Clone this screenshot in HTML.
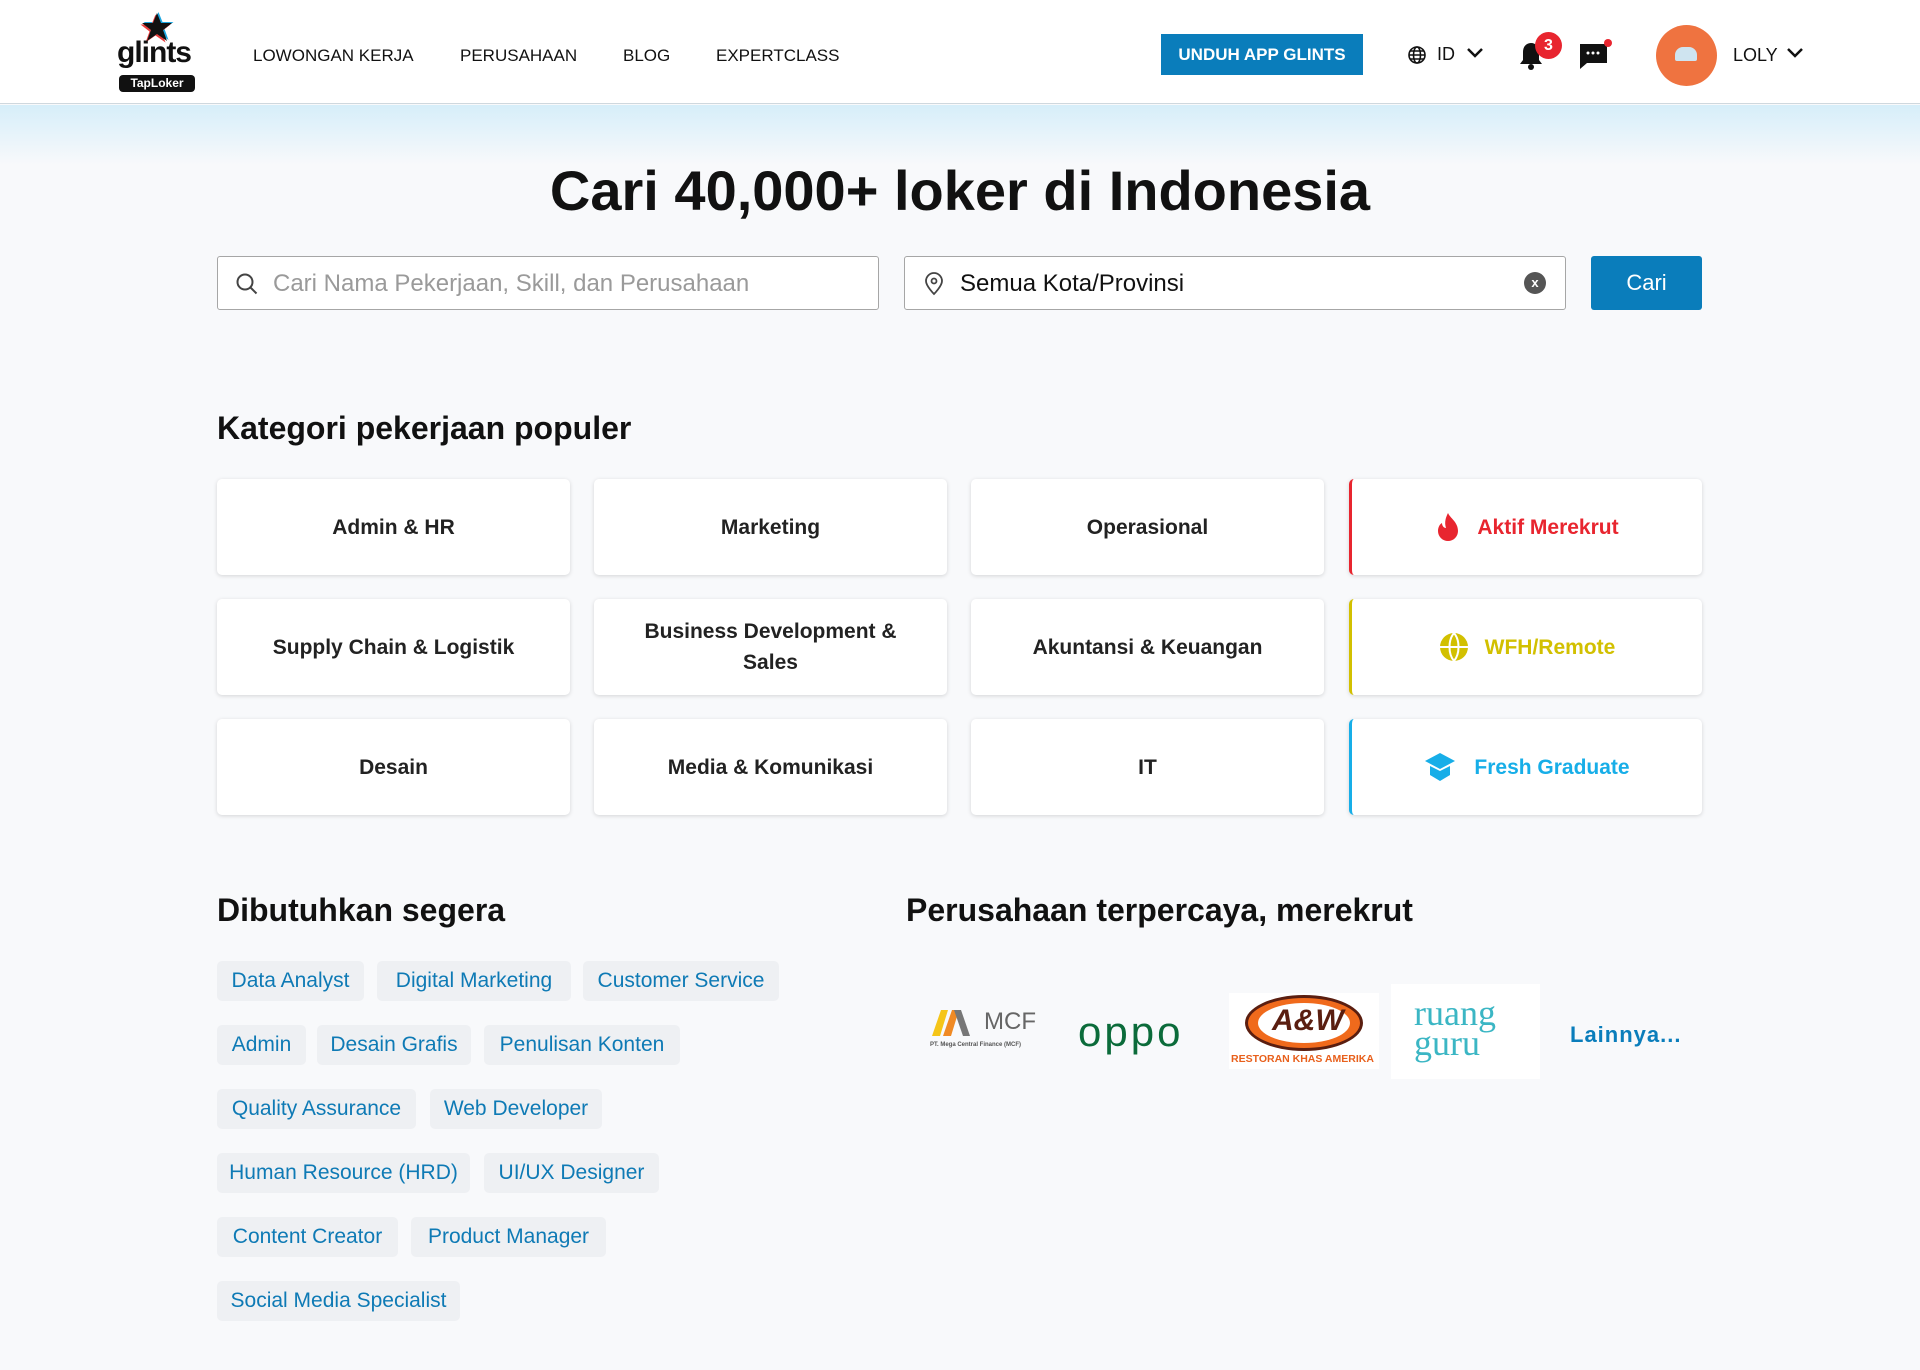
<!DOCTYPE html>
<html><head><meta charset="utf-8"><style>
*{margin:0;padding:0;box-sizing:border-box}
body{width:1920px;height:1370px;background:#f8f9fb;font-family:"Liberation Sans",sans-serif;position:relative;overflow:hidden;color:#1a1a1a}
.a{position:absolute}
.hdr{left:0;top:0;width:1920px;height:104px;background:#fff;border-bottom:1px solid #cfd8de}
.grad{left:0;top:105px;width:1920px;height:60px;background:linear-gradient(#d6eef9,#f8f9fb)}
.nav{top:46px;font-size:17px;color:#111}
.card{background:#fff;border-radius:5px;box-shadow:0 1px 4px rgba(0,0,0,.15);width:353px;height:96px;display:flex;align-items:center;justify-content:center;text-align:center;font-size:21px;font-weight:bold;color:#222;line-height:31px}
.tag{background:#eef0f3;border-radius:5px;height:40px;line-height:40px;font-size:21px;color:#0e7ab5;text-align:center;white-space:nowrap}
.inp{background:#fff;border:1px solid #a6a6a6;border-radius:3px;height:54px;top:256px}
</style></head><body>
<div class="a hdr"></div>
<div class="a grad"></div>
<svg class="a" style="left:140px;top:12px" width="34" height="32" viewBox="0 0 34 32"><polygon points="17,1 21,11 32,11 23,18 27,29 17,22 7,29 11,18 2,11 13,11" fill="#1ba6e0" transform="translate(1.5,-1)"/><polygon points="17,1 21,11 32,11 23,18 27,29 17,22 7,29 11,18 2,11 13,11" fill="#e83e3e" transform="translate(-1.5,1.5)"/><polygon points="17,1 21,11 32,11 23,18 27,29 17,22 7,29 11,18 2,11 13,11" fill="#111"/></svg>
<div class="a" style="left:117px;top:36px;font-size:30px;font-weight:bold;letter-spacing:-1px;color:#111">glints</div>
<div class="a" style="left:119px;top:75px;width:76px;height:17px;background:#111;border-radius:4px;color:#fff;font-size:12px;font-weight:bold;text-align:center;line-height:17px">TapLoker</div>
<div class="a nav" style="left:253px">LOWONGAN KERJA</div>
<div class="a nav" style="left:460px">PERUSAHAAN</div>
<div class="a nav" style="left:623px">BLOG</div>
<div class="a nav" style="left:716px">EXPERTCLASS</div>
<div class="a" style="left:1161px;top:34px;width:202px;height:41px;background:#0a7dbb;color:#fff;font-size:17px;font-weight:bold;text-align:center;line-height:41px">UNDUH APP GLINTS</div>
<svg class="a" style="left:1407px;top:45px" width="20" height="20" viewBox="0 0 20 20" fill="none" stroke="#111" stroke-width="1.6"><circle cx="10" cy="10" r="8"/><ellipse cx="10" cy="10" rx="3.5" ry="8"/><path d="M2 10h16M3 6h14M3 14h14"/></svg>
<div class="a nav" style="left:1437px;top:44px;font-size:18px">ID</div>
<svg class="a" style="left:1466px;top:47px" width="18" height="12" viewBox="0 0 18 12"><path d="M2 2l7 7 7-7" stroke="#111" stroke-width="2.5" fill="none"/></svg>
<svg class="a" style="left:1518px;top:40px" width="26" height="32" viewBox="0 0 26 32"><path d="M13 3c-5 0-8 4-8 9v8l-3 4h22l-3-4v-8c0-5-3-9-8-9z" fill="#111"/><circle cx="13" cy="27" r="3" fill="#111"/></svg>
<div class="a" style="left:1535px;top:32px;width:27px;height:27px;border-radius:50%;background:#e8252f;color:#fff;font-size:16px;font-weight:bold;text-align:center;line-height:27px">3</div>
<svg class="a" style="left:1578px;top:38px" width="36" height="36" viewBox="0 0 36 36"><path d="M2 6h27v19H9l-7 6z" fill="#111"/><circle cx="10" cy="15" r="1.5" fill="#fff"/><circle cx="15" cy="15" r="1.5" fill="#fff"/><circle cx="20" cy="15" r="1.5" fill="#fff"/><circle cx="30" cy="5" r="4" fill="#e8252f"/></svg>
<div class="a" style="left:1656px;top:25px;width:61px;height:61px;border-radius:50%;background:#ef7340"></div>
<div class="a" style="left:1675px;top:47px;width:22px;height:14px;background:#cfe4f0;border-radius:8px 8px 2px 2px"></div>
<div class="a nav" style="left:1733px;top:45px;font-size:18px">LOLY</div>
<svg class="a" style="left:1786px;top:47px" width="18" height="12" viewBox="0 0 18 12"><path d="M2 2l7 7 7-7" stroke="#111" stroke-width="2.5" fill="none"/></svg>

<div class="a" style="left:0;width:1920px;top:158px;text-align:center;font-size:56px;font-weight:bold;color:#111">Cari 40,000+ loker di Indonesia</div>
<div class="a inp" style="left:217px;width:662px"></div>
<svg class="a" style="left:235px;top:272px" width="24" height="24" viewBox="0 0 24 24" fill="none" stroke="#444" stroke-width="2"><circle cx="10" cy="10" r="7.5"/><path d="M15.5 15.5l6 6"/></svg>
<div class="a" style="left:273px;top:270px;font-size:24px;color:#9a9a9a">Cari Nama Pekerjaan, Skill, dan Perusahaan</div>
<div class="a inp" style="left:904px;width:662px"></div>
<svg class="a" style="left:923px;top:272px" width="22" height="24" viewBox="0 0 22 24" fill="none" stroke="#444" stroke-width="1.8"><path d="M11 22s-8-8-8-13a8 8 0 0116 0c0 5-8 13-8 13z"/><circle cx="11" cy="9" r="2.5"/></svg>
<div class="a" style="left:960px;top:270px;font-size:24px;color:#111">Semua Kota/Provinsi</div>
<div class="a" style="left:1524px;top:272px;width:22px;height:22px;border-radius:50%;background:#555;color:#fff;font-size:13px;font-weight:bold;text-align:center;line-height:21px">x</div>
<div class="a" style="left:1591px;top:256px;width:111px;height:54px;background:#0a7dbb;border-radius:3px;color:#fff;font-size:22px;text-align:center;line-height:54px">Cari</div>

<div class="a" style="left:217px;top:410px;font-size:32px;font-weight:bold;color:#111">Kategori pekerjaan populer</div>
<div class="a card" style="left:217px;top:479px">Admin &amp; HR</div>
<div class="a card" style="left:594px;top:479px">Marketing</div>
<div class="a card" style="left:971px;top:479px">Operasional</div>
<div class="a card" style="left:1349px;top:479px;border-left:3px solid #e8252f;color:#e8252f"><svg width="26" height="32" viewBox="0 0 26 32" style="margin-right:16px"><path d="M13 2c2 5 10 9 10 18a10 10 0 01-20 0c0-4 2-7 4-8 0 3 2 5 4 5-2-6 0-11 2-15z" fill="#e8252f"/></svg>Aktif Merekrut</div>
<div class="a card" style="left:217px;top:599px">Supply Chain &amp; Logistik</div>
<div class="a card" style="left:594px;top:599px">Business Development &amp;<br>Sales</div>
<div class="a card" style="left:971px;top:599px">Akuntansi &amp; Keuangan</div>
<div class="a card" style="left:1349px;top:599px;border-left:3px solid #d2c000;color:#d2c000"><svg width="30" height="30" viewBox="0 0 30 30" style="margin-right:16px"><circle cx="15" cy="15" r="14" fill="#d2c000"/><path d="M1 15h28M15 1c-6 7-6 21 0 28M15 1c6 7 6 21 0 28" stroke="#fff" stroke-width="2" fill="none"/></svg>WFH/Remote</div>
<div class="a card" style="left:217px;top:719px">Desain</div>
<div class="a card" style="left:594px;top:719px">Media &amp; Komunikasi</div>
<div class="a card" style="left:971px;top:719px">IT</div>
<div class="a card" style="left:1349px;top:719px;border-left:3px solid #17aee8;color:#17aee8"><svg width="32" height="32" viewBox="0 0 32 32" style="margin-right:18px"><path d="M16 2l15 8-15 8-15-8z" fill="#17aee8"/><path d="M6 15v9l10 6 10-6v-9l-10 5z" fill="#17aee8"/></svg>Fresh Graduate</div>

<div class="a" style="left:217px;top:892px;font-size:32px;font-weight:bold;color:#111">Dibutuhkan segera</div>
<div class="a" style="left:906px;top:892px;font-size:32px;font-weight:bold;color:#111">Perusahaan terpercaya, merekrut</div>

<div class="a tag" style="left:217px;top:961px;width:147px">Data Analyst</div>
<div class="a tag" style="left:377px;top:961px;width:194px">Digital Marketing</div>
<div class="a tag" style="left:583px;top:961px;width:196px">Customer Service</div>
<div class="a tag" style="left:217px;top:1025px;width:89px">Admin</div>
<div class="a tag" style="left:317px;top:1025px;width:154px">Desain Grafis</div>
<div class="a tag" style="left:484px;top:1025px;width:196px">Penulisan Konten</div>
<div class="a tag" style="left:217px;top:1089px;width:199px">Quality Assurance</div>
<div class="a tag" style="left:430px;top:1089px;width:172px">Web Developer</div>
<div class="a tag" style="left:217px;top:1153px;width:253px">Human Resource (HRD)</div>
<div class="a tag" style="left:484px;top:1153px;width:175px">UI/UX Designer</div>
<div class="a tag" style="left:217px;top:1217px;width:181px">Content Creator</div>
<div class="a tag" style="left:411px;top:1217px;width:195px">Product Manager</div>
<div class="a tag" style="left:217px;top:1281px;width:243px">Social Media Specialist</div>

<svg class="a" style="left:932px;top:1010px" width="44" height="26" viewBox="0 0 44 26"><path d="M0 26L9 0h7l-8 26z" fill="#f5c518"/><path d="M11 26L20 0h7l-8 26z" fill="#f08a24"/><path d="M22 0h7l9 26h-7z" fill="#777"/></svg>
<div class="a" style="left:984px;top:1008px;font-size:24px;color:#666">MCF</div>
<div class="a" style="left:930px;top:1042px;font-size:6px;color:#555;font-weight:bold">PT. Mega Central Finance (MCF)</div>
<div class="a" style="left:1078px;top:1008px;font-size:42px;color:#0b6b3a;letter-spacing:3px">oppo</div>
<div class="a" style="left:1229px;top:993px;width:150px;height:76px;background:#fff;overflow:hidden">
<div class="a" style="left:16px;top:2px;width:118px;height:56px;border-radius:50%;background:#f06a1c;border:3px solid #5a1e10"></div>
<div class="a" style="left:29px;top:10px;width:92px;height:40px;border-radius:50%;background:#fff"></div>
<div class="a" style="left:43px;top:11px;font-size:30px;font-weight:bold;font-style:italic;color:#5a1e10">A&amp;W</div>
<div class="a" style="left:2px;top:60px;font-size:10.5px;font-weight:bold;color:#e8601c;white-space:nowrap">RESTORAN KHAS AMERIKA</div>
</div>
<div class="a" style="left:1391px;top:984px;width:149px;height:95px;background:#fff"></div>
<div class="a" style="left:1414px;top:998px;font-family:'Liberation Serif',serif;font-size:36px;line-height:30px;color:#3bb6c4">ruang<br>guru</div>
<div class="a" style="left:1570px;top:1022px;font-size:22px;font-weight:bold;color:#0a7dbb;letter-spacing:1px">Lainnya...</div>
</body></html>
